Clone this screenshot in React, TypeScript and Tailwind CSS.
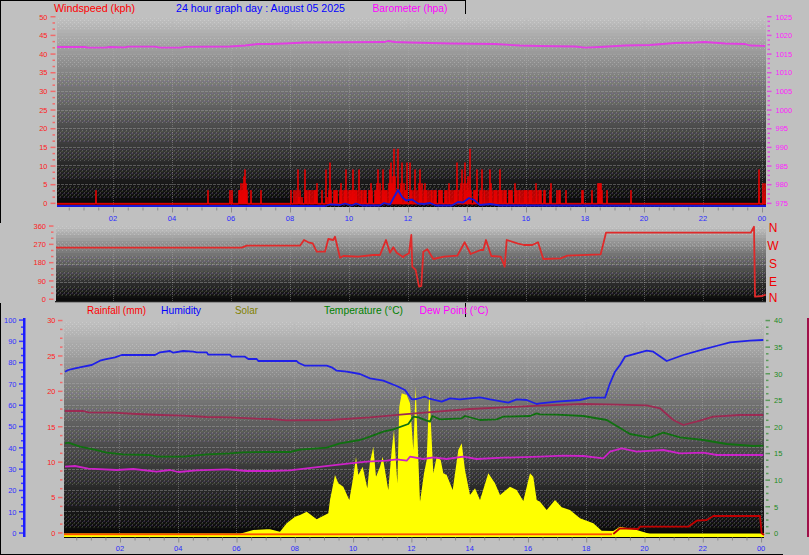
type Pt = [number, number];

// coords below were read off 3x crops, so seg() brings them back to page pixels
const seg = (pts: Pt[], ox: number, oy: number): Pt[] =>
  pts.map(([x, y]) => [ox + x / 3, oy + y / 3] as Pt);
const str = (pts: Pt[]) => pts.map(([x, y]) => `${x.toFixed(1)},${y.toFixed(1)}`).join(" ");

const hours = ["02", "04", "06", "08", "10", "12", "14", "16", "18", "20", "22", "00"];

const gustRows = [
  "0202202051", "2012052223", "2232222300", "0020025102", "6321323323",
  "2323235223", "2325222325", "2322323232", "2323232352", "3235232333",
  "5634843383", "3363332633", "6323253223", "5232232322", "3223223232",
  "2322322323", "2323323633", "3353363343", "8333232523", "2352322323",
  "5323232232", "5223222232", "2322232232", "2223222222", "2322223222",
  "2222220022", "3300000202", "2000002000",
];
const extraGusts: Pt[] = [
  [96, 2], [208, 2], [230, 2], [232, 2], [239, 2], [240, 2], [241, 3], [242, 2], [243, 3], [244, 4], [245, 5],
  [246, 3], [247, 2], [251, 2], [261, 2], [582, 2], [583, 2], [592, 2], [598, 3], [599, 3], [600, 3], [601, 3],
  [602, 2], [607, 2], [631, 2], [759, 5], [763, 3], [765, 3],
];

const gustPoints = (): string => {
  const base = 204;
  const levels: Pt[] = [...extraGusts];
  gustRows.join("").split("").forEach((c, i) => {
    let l = Number(c);
    // thin out the low gusts so the dense stretch keeps its gaps
    if (l <= 3 && (i % 5 === 3 || i % 7 === 0)) l = 0;
    if (l === 3 && i % 3 !== 0) l = 2;
    if (l > 0) levels.push([290 + i, l]);
  });
  levels.sort((a, b) => a[0] - b[0]);
  const pts: Pt[] = [[57, base]];
  levels.forEach(([x, l]) => {
    pts.push([x - 0.4, base], [x, base - l * 6.9], [x + 0.4, base]);
  });
  pts.push([766, base]);
  return str(pts);
};

const gustBlue: Pt[] = [
  [57, 206], [325, 206], [330, 204.5], [340, 205], [345, 203.5], [352, 205.5], [356, 203.5], [362, 205.5],
  [380, 205.5], [384, 203], [390, 204.5], [394, 197], [398, 190], [402, 197], [406, 200.5], [412, 199.5], [418, 203.5],
  [424, 204], [430, 203], [436, 205.5], [452, 205.5], [458, 202], [463, 202.5], [469, 198], [474, 200], [480, 205],
  [490, 204], [500, 205.5], [766, 206],
];

const barometer: Pt[] = [
  [57, 47], [85, 47], [88, 47.7], [105, 47.7], [110, 47], [125, 47.3], [128, 46.6], [155, 46.6], [160, 47.7], [180, 47.7],
  [185, 46.8], [230, 46.5], [245, 45.5], [258, 44], [270, 44], [285, 43.5], [305, 42.5], [385, 42], [388, 41], [395, 42],
  [410, 42.5], [430, 43], [450, 43.5], [495, 44], [520, 45.5], [540, 46], [575, 46.5], [585, 47.7], [600, 47], [625, 45.5],
  [650, 45], [675, 43], [695, 42.5], [705, 42], [725, 43.5], [745, 44], [750, 45.5], [765, 46],
];

const direction: Pt[] = [
  ...seg(
    [[168, 113], [725, 113], [740, 107], [900, 107], [912, 90], [925, 97], [938, 100], [950, 125], [975, 125], [985, 87],
      [1000, 90], [1005, 80], [1020, 143], [1030, 138], [1075, 140], [1120, 135], [1140, 135], [1150, 110], [1158, 90],
      [1170, 128], [1180, 112], [1190, 128], [1210, 142]],
    0, 210),
  ...seg(
    [[0, 138], [15, 130], [22, 75], [25, 170], [35, 180], [45, 230], [52, 228], [58, 125], [70, 118], [88, 147], [120, 140],
      [160, 137], [182, 97], [200, 132], [230, 120], [238, 120], [246, 90], [262, 138], [290, 140], [302, 170], [308, 90],
      [340, 100], [360, 105], [385, 105], [402, 97], [418, 147], [470, 145], [490, 137], [590, 133], [606, 68], [1040, 68],
      [1050, 50], [1053, 260], [1075, 258], [1085, 254]],
    404, 210),
];

const humidity: Pt[] = [
  ...seg(
    [[195, 215], [205, 210], [225, 205], [250, 200], [275, 195], [300, 182], [315, 178], [345, 172], [365, 165], [465, 165],
      [480, 157], [510, 153], [520, 158], [550, 153], [580, 155], [590, 157], [620, 157], [625, 164], [690, 164], [695, 170],
      [735, 170], [745, 177], [770, 177], [775, 183], [810, 183]],
    0, 300),
  ...seg(
    [[80, 183], [85, 188], [105, 197], [170, 197], [185, 202], [200, 212], [230, 215], [270, 222], [300, 235], [340, 242],
      [380, 258], [405, 270], [425, 298], [440, 297], [465, 290], [475, 295], [515, 305], [540, 295], [570, 298], [600, 295],
      [630, 292], [660, 298], [715, 308], [740, 298], [770, 300], [800, 312]],
    270, 300),
  ...seg(
    [[0, 310], [50, 305], [120, 300], [150, 293], [195, 293], [210, 250], [225, 215], [240, 195], [255, 170], [290, 160],
      [320, 152], [340, 155], [380, 183], [430, 165], [490, 148], [540, 135], [570, 127], [630, 122], [670, 120]],
    540, 300),
];

const maroon: Pt[] = [
  ...seg(
    [[195, 333], [250, 333], [265, 337], [340, 338], [410, 342], [480, 345], [550, 347], [620, 351], [690, 352], [770, 356],
      [810, 357]],
    0, 300),
  ...seg([[50, 361], [180, 360], [300, 352], [400, 343], [500, 335], [600, 327], [700, 322], [810, 317]], 270, 300),
  ...seg(
    [[130, 312], [200, 313], [320, 316], [360, 325], [400, 360], [430, 375], [480, 362], [520, 350], [600, 345], [670, 345]],
    540, 300),
];

const temperature: Pt[] = [
  ...seg(
    [[195, 430], [205, 428], [240, 440], [280, 448], [320, 458], [370, 463], [450, 465], [470, 470], [550, 470], [620, 463],
      [690, 460], [730, 457], [810, 456]],
    0, 300),
  ...seg(
    [[60, 456], [90, 449], [170, 443], [210, 430], [270, 420], [300, 410], [340, 395], [370, 388], [415, 372], [430, 350],
      [445, 352], [470, 362], [480, 365], [487, 348], [510, 358], [575, 355], [585, 348], [630, 360], [680, 358], [700, 350],
      [780, 348], [800, 340], [810, 343]],
    270, 300),
  ...seg(
    [[50, 344], [130, 348], [200, 360], [230, 378], [270, 402], [330, 413], [370, 398], [420, 412], [490, 420], [560, 432],
      [640, 438], [670, 437]],
    540, 300),
];

const dewPoint: Pt[] = [
  ...seg(
    [[195, 500], [225, 498], [265, 506], [350, 510], [400, 507], [470, 515], [510, 510], [535, 516], [590, 511], [680, 508],
      [740, 513], [810, 513]],
    0, 300),
  ...seg(
    [[60, 511], [110, 505], [180, 497], [240, 490], [290, 485], [350, 482], [380, 478], [410, 482], [420, 470], [460, 477],
      [490, 472], [530, 477], [580, 470], [620, 477], [700, 473], [810, 470]],
    270, 300),
  ...seg(
    [[70, 467], [130, 468], [190, 475], [210, 455], [245, 445], [290, 455], [370, 450], [420, 460], [490, 458], [530, 465],
      [630, 465], [670, 465]],
    540, 300),
];

const solar: Pt[] = [
  [236, 536],
  ...seg([[725, 700], [760, 690], [800, 688]], 0, 300),
  ...seg(
    [[0, 688], [30, 695], [50, 670], [75, 650], [90, 645], [110, 635], [140, 658], [175, 640], [180, 600], [195, 525], [205, 550],
      [220, 560], [238, 600], [250, 530], [258, 470], [265, 525], [278, 500], [292, 565], [300, 485], [310, 440], [318, 530],
      [330, 500], [338, 470], [355, 570], [365, 450], [372, 390], [382, 550], [388, 320], [395, 280], [410, 285], [420, 310],
      [430, 450], [437, 258], [442, 400], [450, 605], [462, 520], [470, 480], [478, 270], [490, 520], [500, 470], [512, 480],
      [520, 520], [530, 525], [548, 570], [565, 450], [575, 430], [585, 510], [600, 585], [615, 565], [630, 600], [655, 520],
      [675, 550], [690, 585], [720, 560], [740, 570], [760, 603], [780, 520], [790, 530], [800, 600], [810, 605]],
    270, 300),
  ...seg(
    [[20, 630], [45, 600], [65, 622], [90, 630], [120, 655], [160, 670], [185, 692], [220, 693], [240, 680], [290, 690], [330, 702],
      [660, 702]],
    540, 300),
];

const rainfall: Pt[] = seg(
  [[220, 702], [240, 685], [295, 687], [300, 680], [445, 680], [470, 662], [500, 660], [520, 648], [660, 648], [665, 700], [672, 705]],
  540, 300);

const Line = ({ pts, color, width = 1.8 }: { pts: Pt[]; color: string; width?: number }) => (
  <polyline points={str(pts)} fill="none" stroke={color} strokeWidth={width} strokeLinejoin="round" />
);

const Patterns = () => (
  <defs>
    <pattern id="dither-a" width="4" height="4" patternUnits="userSpaceOnUse">
      <rect x="0" y="0" width="1" height="1" fill="#fff" fillOpacity="0.2" />
      <rect x="2" y="2" width="1" height="1" fill="#fff" fillOpacity="0.2" />
    </pattern>
    <pattern id="dither-b" width="4" height="4" patternUnits="userSpaceOnUse">
      <rect x="0" y="1" width="1" height="1" fill="#c070c0" fillOpacity="0.22" />
      <rect x="2" y="3" width="1" height="1" fill="#70a050" fillOpacity="0.22" />
      <rect x="3" y="1" width="1" height="1" fill="#6060c0" fillOpacity="0.25" />
      <rect x="1" y="3" width="1" height="1" fill="#a0a060" fillOpacity="0.18" />
    </pattern>
  </defs>
);

// stepped grey ramp with a dithered strip at the top of every band, like the old chart control draws it
const PlotBg = ({ x, y, w, h, band }: { x: number; y: number; w: number; h: number; band: number }) => {
  const rows: number[] = [];
  for (let r = 0; r < h; r += 3) rows.push(r);
  const bands: number[] = [];
  for (let b = 0; b < h; b += band) bands.push(b);
  return (
    <g shapeRendering="crispEdges">
      {rows.map((r) => {
        const g = Math.round(184 * Math.pow(1 - r / h, 1.15) + 6);
        return <rect key={r} x={x} y={y + r} width={w} height={3.2} fill={`rgb(${g},${g},${g})`} />;
      })}
      {bands.map((b) => (
        <g key={b}>
          <rect x={x} y={y + b} width={w} height={Math.min(band * 0.65, h - b)} fill="url(#dither-a)" />
          {b / h > 0.2 && (
            <rect x={x} y={y + b} width={w} height={Math.min(band * 0.65, h - b)} fill="url(#dither-b)" />
          )}
        </g>
      ))}
    </g>
  );
};

const Grid = ({ xs, ys, x, y, w, h }: { xs: number[]; ys: number[]; x: number; y: number; w: number; h: number }) => (
  <g stroke="#b0b0b0" strokeOpacity="0.4" shapeRendering="crispEdges">
    {xs.map((gx) => (
      <line key={gx} x1={gx} x2={gx} y1={y} y2={y + h} strokeDasharray="1 1" />
    ))}
    {ys.map((gy) => (
      <line key={gy} x1={x} x2={x + w} y1={gy} y2={gy} strokeDasharray="3 1" />
    ))}
  </g>
);

type AxisProps = {
  top: number;
  step: number;
  labels: string[];
  minors: number;
  tickX: number;
  majorW: number;
  minorX: number;
  minorW: number;
  labelX: number;
  anchor: "start" | "end";
  color: string;
  textColor: string;
};

// labels run top to bottom, ticks sit on the page pixel row given by top + i * step
const Axis = ({ top, step, labels, minors, tickX, majorW, minorX, minorW, labelX, anchor, color, textColor }: AxisProps) => (
  <g>
    {labels.map((t, i) => (
      <g key={t + i}>
        <rect x={tickX} y={top + i * step - 0.7} width={majorW} height={1.5} fill={color} />
        {i < labels.length - 1 &&
          Array.from({ length: minors }, (_, m) => (
            <rect
              key={m}
              x={minorX}
              y={top + i * step + ((m + 1) * step) / (minors + 1) - 0.7}
              width={minorW}
              height={1.5}
              fill={color}
            />
          ))}
        <text x={labelX} y={top + i * step + 2.8} fontSize="7.5" textAnchor={anchor} fill={textColor}>
          {t}
        </text>
      </g>
    ))}
  </g>
);

const HourAxis = ({ x0, perHour, tickY, labelY }: { x0: number; perHour: number; tickY: number; labelY: number }) => (
  <g>
    {Array.from({ length: 48 }, (_, i) => {
      const x = x0 + perHour * ((i + 1) / 2);
      const major = (i + 1) % 4 === 0;
      return <rect key={i} x={x} y={tickY} width={1} height={major ? 5 : 3} fill="#8c8c8c" />;
    })}
    {hours.map((h, i) => (
      <text key={h} x={x0 + perHour * (i + 1) * 2} y={labelY} fontSize="7.5" textAnchor="middle" fill="#2a2aff">
        {h}
      </text>
    ))}
  </g>
);

const Legend = ({ x, w, y, color, children }: { x: number; w: number; y: number; color: string; children: string }) => (
  <text x={x} y={y} fontSize="11.5" fill={color} textLength={w} lengthAdjust="spacingAndGlyphs">
    {children}
  </text>
);

const WindChart = () => {
  const windX = (h: number) => 54 + 29.5 * h;
  const windY = Array.from({ length: 11 }, (_, i) => 16.7 + i * 18.66);
  const xs = hours.map((_, i) => windX((i + 1) * 2));
  return (
    <svg viewBox="0 0 809 222" className="block h-[222px] w-[809px] shrink-0 overflow-visible">
      <Patterns />
      <rect x="0" y="0" width="465" height="1" fill="#000" />
      <rect x="465" y="0" width="1" height="14" fill="#000" />
      <rect x="0" y="0" width="1" height="222" fill="#000" />
      <Legend x={54} w={81} y={12} color="#ff0000">Windspeed (kph)</Legend>
      <Legend x={176} w={169} y={12} color="#0000ff">24 hour graph day : August 05 2025</Legend>
      <Legend x={372.5} w={75} y={12} color="#ff00ff">Barometer (hpa)</Legend>
      <PlotBg x={57} y={18} w={709} h={189} band={18.66} />
      <Grid xs={xs} ys={windY.slice(1, 10)} x={57} y={18} w={709} h={189} />
      <Axis top={16.7} step={18.66} labels={["50", "45", "40", "35", "30", "25", "20", "15", "10", "5", "0"]} minors={2}
        tickX={50.5} majorW={5} minorX={52.5} minorW={2.5} labelX={47.5} anchor="end" color="#f06a6a" textColor="#ff2020" />
      <Axis top={16.7} step={18.66} labels={["1025", "1020", "1015", "1010", "1005", "1000", "995", "990", "985", "980", "975"]} minors={3}
        tickX={767} majorW={4.5} minorX={767.5} minorW={2.5} labelX={775.5} anchor="start" color="#e050e0" textColor="#ff20ff" />
      <Line pts={barometer} color="#e23ee2" />
      <rect x="57" y="202.8" width="709" height="1.6" fill="#c40000" />
      <polyline points={gustPoints()} fill="none" stroke="#ee0000" strokeWidth={1} />
      <Line pts={gustBlue} color="#1818d8" />
      <HourAxis x0={54} perHour={29.5} tickY={207.5} labelY={221} />
    </svg>
  );
};

const DirectionChart = () => {
  const xs = hours.map((_, i) => 54 + 29.5 * (i + 1) * 2);
  return (
    <svg viewBox="0 222 809 81" className="block h-[81px] w-[809px] shrink-0 overflow-visible">
      <rect x="0" y="222" width="1" height="1" fill="#000" />
      <PlotBg x={56} y={226} w={710} h={75} band={15} />
      <Grid xs={xs} ys={[245, 264, 282]} x={56} y={226} w={710} h={75} />
      <rect x="55" y="301" width="711" height="1.3" fill="#222" />
      <Axis top={226} step={18.3} labels={["360", "270", "180", "90", "0"]} minors={2}
        tickX={49} majorW={4.5} minorX={51} minorW={2.5} labelX={46} anchor="end" color="#f06a6a" textColor="#ff2020" />
      <Line pts={direction} color="#e02a2a" />
      {[["N", 232], ["W", 249.5], ["S", 267.5], ["E", 285.5], ["N", 302]].map(([t, y], i) => (
        <text key={i} x={773} y={y} fontSize="12" textAnchor="middle" fill="#f00000">
          {t}
        </text>
      ))}
    </svg>
  );
};

const RainChart = () => {
  const xs = hours.map((_, i) => 61.7 + 29.14 * (i + 1) * 2);
  const ys = Array.from({ length: 9 }, (_, i) => 533 - 21.3 * (i + 1));
  return (
    <svg viewBox="0 303 809 252" className="block h-[252px] w-[809px] shrink-0 overflow-visible">
      <rect x="0" y="303" width="1" height="252" fill="#000" />
      <rect x="0" y="554" width="783" height="1" fill="#000" />
      <rect x="465" y="303" width="1" height="14" fill="#000" />
      <Legend x={87} w={59} y={314} color="#ff0000">Rainfall (mm)</Legend>
      <Legend x={161} w={40} y={314} color="#0000ff">Humidity</Legend>
      <Legend x={235} w={23} y={314} color="#808000">Solar</Legend>
      <Legend x={324} w={79} y={314} color="#008000">Temperature (°C)</Legend>
      <Legend x={419.5} w={69} y={314} color="#ff00ff">Dew Point (°C)</Legend>
      <PlotBg x={64} y={322} w={700} h={215} band={21.3} />
      <Grid xs={xs} ys={ys} x={64} y={322} w={700} h={215} />
      <rect x="23" y="318" width="2.5" height="219" fill="#1c1cff" />
      <Axis top={320} step={21.3} labels={["100", "90", "80", "70", "60", "50", "40", "30", "20", "10", "0"]} minors={2}
        tickX={19} majorW={4} minorX={21} minorW={2} labelX={16.5} anchor="end" color="#3c3cff" textColor="#3030ff" />
      <Axis top={320.5} step={35.4} labels={["30", "25", "20", "15", "10", "5", "0"]} minors={3}
        tickX={58} majorW={4.5} minorX={60} minorW={2.5} labelX={55.5} anchor="end" color="#f06a6a" textColor="#ff2020" />
      <Axis top={320.5} step={26.6} labels={["40", "35", "30", "25", "20", "15", "10", "5", "0"]} minors={3}
        tickX={765.5} majorW={4.5} minorX={766} minorW={2.5} labelX={774} anchor="start" color="#5a9a5a" textColor="#1d8a1d" />
      <rect x="807" y="318" width="2" height="219" fill="#a0104a" />
      <polygon points={`${str(solar)} 764,536`} fill="#ffff00" />
      <rect x="64" y="533.5" width="700" height="3.5" fill="#ffff00" />
      <Line pts={humidity} color="#2020e8" />
      <Line pts={maroon} color="#9c2a52" />
      <Line pts={temperature} color="#107010" />
      <Line pts={dewPoint} color="#cc22c8" />
      <rect x="64" y="533.4" width="548" height="1.8" fill="#ff5000" />
      <Line pts={rainfall} color="#c00000" />
      <HourAxis x0={61.7} perHour={29.14} tickY={537.5} labelY={551} />
    </svg>
  );
};

const App = () => (
  <div className="flex h-[555px] w-[809px] flex-col overflow-hidden bg-[#c0c0c0] font-['Liberation_Sans',Arial,sans-serif]">
    <WindChart />
    <DirectionChart />
    <RainChart />
  </div>
);

export default App;
